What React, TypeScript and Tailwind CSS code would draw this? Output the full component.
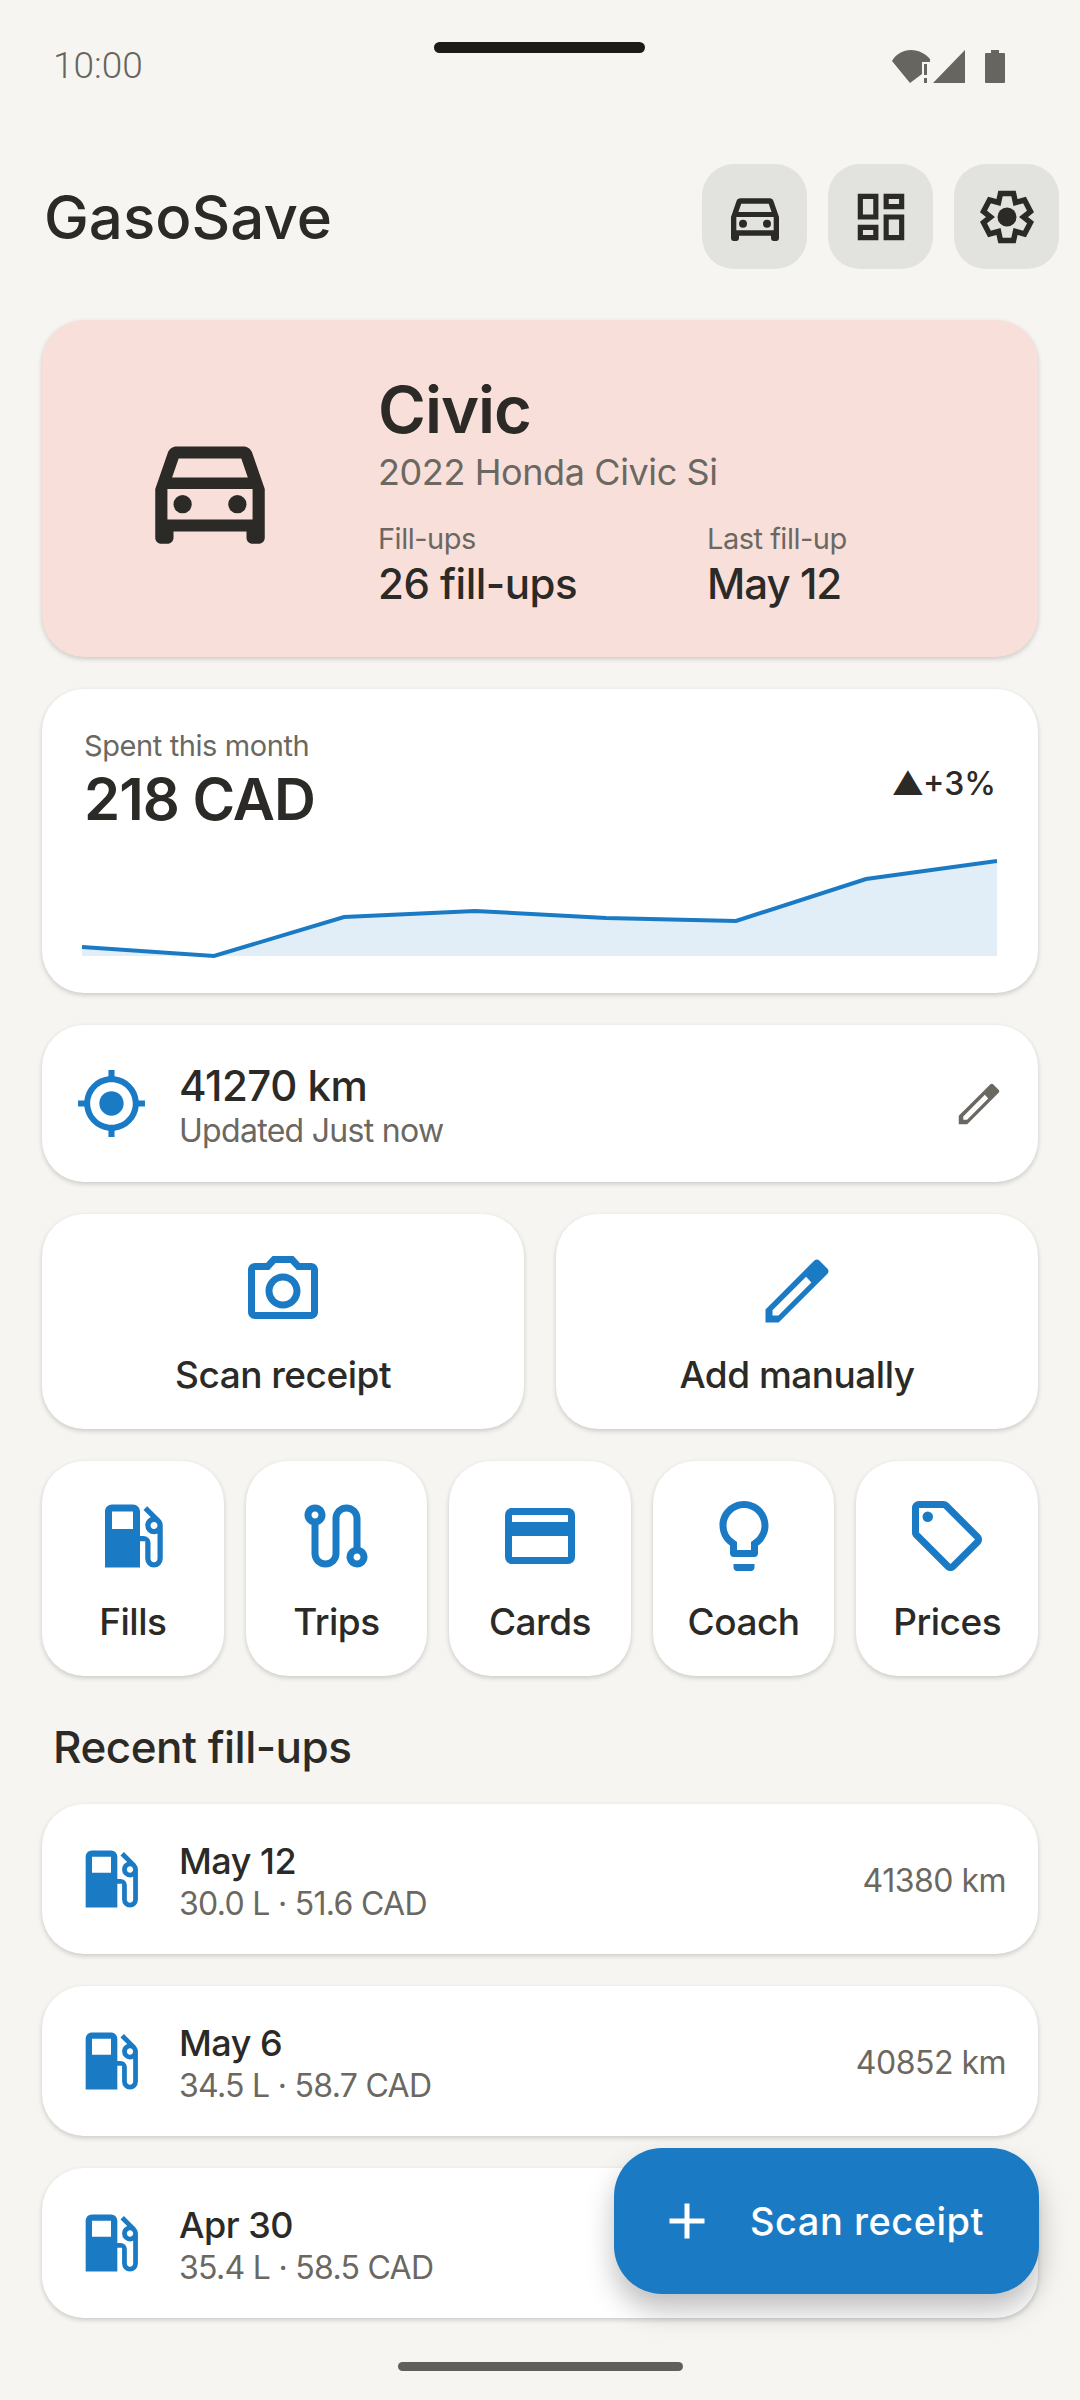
import {
  MdAdd,
  MdGpsFixed,
  MdLocalGasStation,
  MdOutlineCameraAlt,
  MdOutlineCreditCard,
  MdOutlineDashboard,
  MdOutlineDirectionsCar,
  MdOutlineLightbulb,
  MdOutlineLocalOffer,
  MdOutlineRoute,
} from "react-icons/md";

const font = { fontFamily: "Inter, sans-serif" };

const shortcuts = [
  { label: "Fills", Icon: MdLocalGasStation },
  { label: "Trips", Icon: MdOutlineRoute },
  { label: "Cards", Icon: MdOutlineCreditCard },
  { label: "Coach", Icon: MdOutlineLightbulb },
  { label: "Prices", Icon: MdOutlineLocalOffer },
];

const fills = [
  { date: "May 12", detail: "30.0 L · 51.6 CAD", km: "41380 km" },
  { date: "May 6", detail: "34.5 L · 58.7 CAD", km: "40852 km" },
  { date: "Apr 30", detail: "35.4 L · 58.5 CAD", km: "" },
];

// pencil with a solid tip, the stock outlined one has a gap near the tip
const PencilIcon = ({ size, className }: { size: number; className?: string }) => (
  <svg width={size} height={size} viewBox="0 0 24 24" fill="currentColor" className={className}>
    <path
      fillRule="evenodd"
      d="M3 17.25V21h3.75L20.71 7.04c.39-.39.39-1.02 0-1.41l-2.34-2.34c-.39-.39-1.02-.39-1.41 0L3 17.25z M14.6 7.9 L16.1 9.6 L6.7 19 H5 V17.5 Z"
    />
  </svg>
);

const GearIcon = () => (
  <svg width="56" height="56" viewBox="-28 -28 56 56" fill="none" stroke="currentColor">
    <polygon
      strokeWidth="5.5"
      points="-6.5,-23.5 6.5,-23.5 8.5,-14.5 17.5,-17 23.5,-5.5 16.5,0 23.5,5.5 17.5,17 8.5,14.5 6.5,23.5 -6.5,23.5 -8.5,14.5 -17.5,17 -23.5,5.5 -16.5,0 -23.5,-5.5 -17.5,-17 -8.5,-14.5"
    />
    <circle r="9.5" fill="currentColor" stroke="none" />
  </svg>
);

const HeaderButton = ({ children }: { children: React.ReactNode }) => (
  <div className="flex h-[105px] w-[105px] items-center justify-center rounded-[32px] bg-[#e2e2df] text-[#2b2a27]">
    {children}
  </div>
);

const Chart = () => (
  <svg viewBox="82 855 915 105" className="mt-[21px] -ml-[2px] h-[105px] w-[915px]">
    <path
      d="M82 947 L214 956 L344 917 L475 911 L606 918 L736 921 L866 879 L997 861 L997 956 L82 956 Z"
      fill="#e1edf7"
    />
    <path
      d="M82 947 L214 956 L344 917 L475 911 L606 918 L736 921 L866 879 L997 861"
      fill="none"
      stroke="#1b7ac4"
      strokeWidth="4"
    />
  </svg>
);

export default function App() {
  return (
    <div style={font} className="relative h-[2400px] w-[1080px] overflow-hidden bg-[#f6f5f1] text-[#2b2a27]">
      <div className="absolute left-[434px] top-[42px] h-[11px] w-[211px] rounded-full bg-[#1c1c17]" />

      <div className="flex h-[132px] items-center justify-between pl-[53px] pr-[75px]">
        <span style={{ fontFamily: "Roboto, sans-serif" }} className="text-[37px] font-light text-[#666560]">
          10:00
        </span>
        <div className="flex items-start gap-[3px]">
          <svg width="38" height="33" viewBox="0 0 38 33" fill="#666560">
            <path d="M18 33 L0 11 C4 4 11 0 19 0 C27 0 34 4 38 9 V12 H30 V24 Z" />
            <rect x="32" y="14" width="3" height="11" />
            <rect x="32" y="28" width="3" height="5" />
          </svg>
          <svg width="32" height="33" viewBox="0 0 32 33" fill="#666560">
            <path d="M32 0 L32 33 L0 33 Z" />
          </svg>
          <svg width="20" height="33" viewBox="0 0 20 33" fill="#666560" className="ml-[17px]">
            <path d="M6 0 H14 V3 H19 a1 1 0 0 1 1 1 V32 a1 1 0 0 1 -1 1 H1 a1 1 0 0 1 -1 -1 V4 a1 1 0 0 1 1 -1 H6 Z" />
          </svg>
        </div>
      </div>

      <div className="mt-[32px] flex h-[105px] items-center justify-between pl-[44px] pr-[21px]">
        <span className="text-[60px] font-medium">GasoSave</span>
        <div className="flex gap-[21px]">
          <HeaderButton><MdOutlineDirectionsCar size={64} /></HeaderButton>
          <HeaderButton><MdOutlineDashboard size={62} /></HeaderButton>
          <HeaderButton><GearIcon /></HeaderButton>
        </div>
      </div>

      <div className="mx-[42px] mt-[51px] flex flex-col">
        <div className="flex h-[337px] items-center rounded-[42px] bg-[#f9dfda] shadow-[0_2px_5px_rgba(0,0,0,0.18)]">
          <div className="flex w-[336px] justify-center">
            <MdOutlineDirectionsCar size={146} />
          </div>
          <div className="flex flex-col pt-[5px]">
            <span className="text-[65px] font-semibold leading-[74px] tracking-[-1px]">Civic</span>
            <span className="mt-[3px] text-[36px] leading-[44px] tracking-[-0.4px] text-[#6b6862]">2022 Honda Civic Si</span>
            <div className="mt-[27px] flex">
              <div className="flex w-[329px] flex-col">
                <span className="text-[29px] leading-[36px] tracking-[-0.5px] text-[#6b6862]">Fill-ups</span>
                <span className="mt-[1px] text-[42px] font-medium leading-[52px] tracking-[-0.5px]">26 fill-ups</span>
              </div>
              <div className="flex flex-col">
                <span className="text-[29px] leading-[36px] tracking-[-0.5px] text-[#6b6862]">Last fill-up</span>
                <span className="mt-[1px] text-[42px] font-medium leading-[52px] tracking-[-1px]">May 12</span>
              </div>
            </div>
          </div>
        </div>

        <div className="mt-[32px] flex h-[304px] flex-col rounded-[42px] bg-white px-[42px] pt-[39px] shadow-[0_2px_5px_rgba(0,0,0,0.18)]">
          <div className="flex items-center justify-between">
            <div className="flex flex-col">
              <span className="text-[29px] leading-[36px] tracking-[-0.4px] text-[#6b6862]">Spent this month</span>
              <span className="text-[58px] font-semibold leading-[70px] tracking-[-1px]">218 CAD</span>
            </div>
            <span className="mt-[6px] text-[32px] font-medium">▲+3%</span>
          </div>
          <Chart />
        </div>

        <div className="mt-[32px] flex h-[157px] items-center rounded-[42px] bg-white pl-[33px] pr-[32px] shadow-[0_2px_5px_rgba(0,0,0,0.18)]">
          <MdGpsFixed size={73} className="text-[#1b7ac4]" />
          <div className="ml-[31px] flex flex-1 flex-col pt-[4px]">
            <span className="text-[42px] font-medium leading-[50px] tracking-[-0.5px]">41270 km</span>
            <span className="text-[32px] leading-[40px] tracking-[-0.7px] text-[#6b6862]">Updated Just now</span>
          </div>
          <PencilIcon size={54} className="text-[#6b6862]" />
        </div>

        <div className="mt-[32px] flex gap-[32px]">
          <div className="flex h-[215px] flex-1 flex-col items-center rounded-[42px] bg-white pt-[35px] shadow-[0_2px_5px_rgba(0,0,0,0.18)]">
            <MdOutlineCameraAlt size={84} className="text-[#1b7ac4]" />
            <span className="mt-[18px] text-[37px] font-medium leading-[48px] tracking-[-0.5px]">Scan receipt</span>
          </div>
          <div className="flex h-[215px] flex-1 flex-col items-center rounded-[42px] bg-white pt-[35px] shadow-[0_2px_5px_rgba(0,0,0,0.18)]">
            <PencilIcon size={84} className="text-[#1b7ac4]" />
            <span className="mt-[18px] text-[37px] font-medium leading-[48px] tracking-[-0.5px]">Add manually</span>
          </div>
        </div>

        <div className="mt-[32px] grid grid-cols-5 gap-[22px]">
          {shortcuts.map(({ label, Icon }) => (
            <div key={label} className="flex h-[215px] flex-col items-center rounded-[42px] bg-white pt-[33px] shadow-[0_2px_5px_rgba(0,0,0,0.18)]">
              <Icon size={84} className="text-[#1b7ac4]" />
              <span className="mt-[20px] text-[37px] font-medium leading-[48px] tracking-[-0.5px]">{label}</span>
            </div>
          ))}
        </div>

        <span className="ml-[11px] mt-[46px] text-[44px] font-medium leading-[50px] tracking-[-0.5px]">Recent fill-ups</span>

        <div className="mt-[32px] flex flex-col gap-[32px]">
          {fills.map((fill) => (
            <div key={fill.date} className="flex h-[150px] items-center rounded-[42px] bg-white pl-[31px] pr-[32px] shadow-[0_2px_5px_rgba(0,0,0,0.18)]">
              <MdLocalGasStation size={76} className="text-[#1b7ac4]" />
              <div className="ml-[30px] flex flex-1 flex-col pt-[4px]">
                <span className="text-[36px] font-medium leading-[44px] tracking-[-0.5px]">{fill.date}</span>
                <span className="mt-[1px] text-[32px] leading-[40px] tracking-[-0.7px] text-[#6b6862]">{fill.detail}</span>
              </div>
              <span className="pt-[3px] text-[32px] tracking-[-0.5px] text-[#6b6862]">{fill.km}</span>
            </div>
          ))}
        </div>
      </div>

      <div className="absolute left-[614px] top-[2148px] flex h-[146px] w-[425px] items-center rounded-[48px] bg-[#1b7ac4] pl-[43px] text-white shadow-[0_16px_28px_rgba(0,0,0,0.25)]">
        <MdAdd size={60} />
        <span className="ml-[33px] text-[38px] font-medium tracking-[0.5px]">Scan receipt</span>
      </div>

      <div className="absolute left-[398px] top-[2362px] h-[9px] w-[285px] rounded-full bg-[#5f5f5c]" />
    </div>
  );
}
